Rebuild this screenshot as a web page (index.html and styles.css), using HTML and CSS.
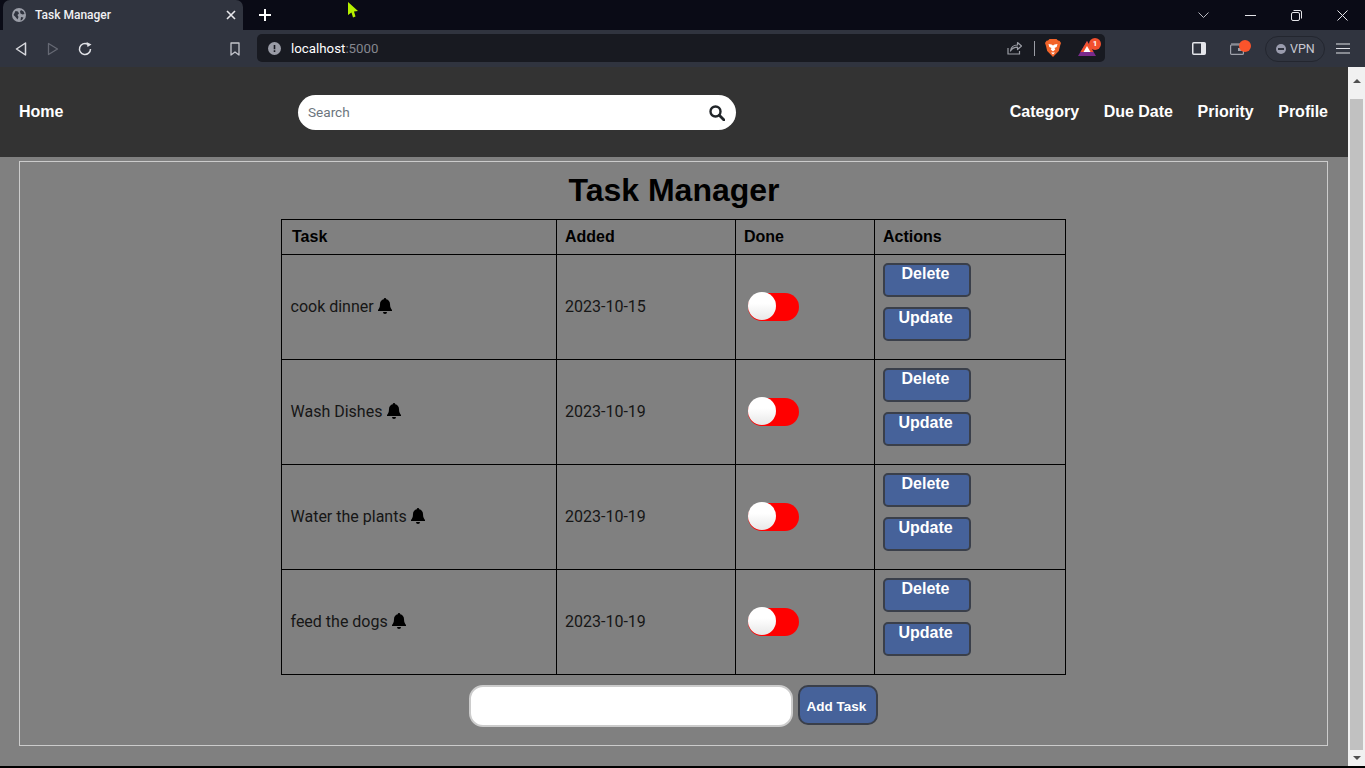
FILE: index.html
```html
<!DOCTYPE html>
<html lang="en">
<head>
<meta charset="utf-8">
<title>Task Manager</title>
<link rel="stylesheet" href="styles.css">
</head>
<body>
<div class="tabstrip">
  <div class="tab">
    <svg class="globe" width="14" height="14" viewBox="0 0 14 14"><circle cx="7" cy="7" r="7" fill="#9b9ea8"/><path d="M3.500 3l2.500.5 1 2-1.500 1.500 1 2-1 2.500-2-2.500-2-2zM9 2l2.500 1.500 1 2.500-2 .5-2-1-.5-2zM9 9l2.500 .5-1.500 2.500-1.500 .5z" fill="#30343f"/></svg>
    <span class="tab-title">Task Manager</span>
    <svg class="tab-close" width="10" height="10" viewBox="0 0 10 10"><path d="M1 1l8 8M9 1l-8 8" stroke="#e8e8ec" stroke-width="1.600"/></svg>
  </div>
  <svg class="new-tab" width="12" height="12" viewBox="0 0 12 12"><path d="M6 0v12M0 6h12" stroke="#fff" stroke-width="2"/></svg>
  <div class="window-controls">
    <svg class="wc-chevron" width="11" height="7" viewBox="0 0 11 7"><path d="M.5 .5l5 5 5-5" fill="none" stroke="#b8b9c0"/></svg>
    <svg class="wc-min" width="11" height="3" viewBox="0 0 11 3"><path d="M0 1.500h11" stroke="#e4e4e8"/></svg>
    <svg class="wc-restore" width="11" height="11" viewBox="0 0 11 11"><rect x=".5" y="2.500" width="8" height="8" rx="1.500" fill="none" stroke="#e4e4e8"/><path d="M2.500 .5h6.500a1.500 1.500 0 0 1 1.500 1.500v6.500" fill="none" stroke="#e4e4e8"/></svg>
    <svg class="wc-close" width="11" height="11" viewBox="0 0 11 11"><path d="M.5 .5l10 10M10.500 .5l-10 10" stroke="#e4e4e8"/></svg>
  </div>
</div>
<div class="toolbar">
  <svg class="tb-back" width="12" height="14" viewBox="0 0 12 14"><path d="M10.500 1v12L1.500 7z" fill="none" stroke="#d8d9de" stroke-width="1.500" stroke-linejoin="round"/></svg>
  <svg class="tb-forward" width="12" height="14" viewBox="0 0 12 14"><path d="M1.500 1.500v11l9-5.500z" fill="none" stroke="#666974" stroke-width="1.300" stroke-linejoin="round"/></svg>
  <svg class="tb-reload" width="14" height="14" viewBox="0 0 14 14"><path d="M12.500 7A5.500 5.500 0 1 1 9.500 2.100" fill="none" stroke="#e0e1e6" stroke-width="1.500"/><path d="M8.500 0l5 2.500-4 2.500z" fill="#e0e1e6"/></svg>
  <svg class="tb-bookmark" width="10" height="14" viewBox="0 0 10 14"><path d="M1 1h8v12L5 10l-4 3z" fill="none" stroke="#c4c5cc" stroke-width="1.300" stroke-linejoin="round"/></svg>
  <div class="address">
    <svg class="info" width="13" height="13" viewBox="0 0 13 13"><circle cx="6.500" cy="6.500" r="6.500" fill="#9a9ca6"/><path d="M5.700 3h1.600v4.200H5.700zM5.700 8.300h1.600v1.600H5.700z" fill="#181a21"/></svg>
    <span class="host">localhost<span class="port">:5000</span></span>
    <svg class="share" width="15" height="14" viewBox="0 0 15 14"><path d="M1 7v6h11.500V10" fill="none" stroke="#9b9da5" stroke-width="1.200"/><path d="M3.500 10c.5-4 3.500-6 7-6V1.500L14.500 5l-4 3.500V6.200C7.500 6.200 5 7.500 3.500 10z" fill="none" stroke="#9b9da5" stroke-width="1.200" stroke-linejoin="round"/></svg>
    <span class="sep"></span>
    <svg class="brave" width="16" height="18" viewBox="0 0 16 18"><path d="M4.500 0h7L13 1.500l1.500.2L16 4l-1 3-1.200 5L8 18l-5.800-6L1 7 0 4l1.500-2.300L3 1.500z" fill="#f2642a"/><path d="M3.500 5l3 .5L8 6.500l1.500-1 3-.5-.8 3-2.200 1 .8 1.500L8 12.500 5.700 10.500l.8-1.500-2.200-1zM6 13.500h4L8 15.500z" fill="#fff"/></svg>
    <span class="rewards">
      <svg width="18" height="15" viewBox="0 0 18 15"><path d="M9 0l9 15H0z" fill="#7a2a8c"/><path d="M9 0l6.500 11H2.500z" fill="#f2542d"/><path d="M9 5l3.500 6h-7z" fill="#fff"/></svg>
      <span class="badge">1</span>
    </span>
  </div>
  <svg class="tb-sidebar" width="14" height="13" viewBox="0 0 14 13"><rect x=".75" y=".75" width="12.500" height="11.500" rx="1" fill="none" stroke="#e4e5ea" stroke-width="1.500"/><rect x="9" y="1" width="4" height="11" fill="#e4e5ea"/></svg>
  <span class="wallet">
    <svg width="14" height="12" viewBox="0 0 14 12"><rect x=".6" y="2" width="12.800" height="9.400" rx="1" fill="none" stroke="#9fa1aa" stroke-width="1.200"/><path d="M1 1h9" stroke="#9fa1aa" stroke-width="1.200"/><rect x="8" y="5" width="5" height="3" fill="#9fa1aa"/></svg>
    <span class="wallet-dot"></span>
  </span>
  <div class="vpn">
    <svg class="vpn-dot" width="10" height="10" viewBox="0 0 10 10"><circle cx="5" cy="5" r="5" fill="#9a9cae"/><rect x="2" y="4" width="6" height="2" fill="#30343f"/></svg>
    VPN
  </div>
  <svg class="tb-menu" width="14" height="11" viewBox="0 0 14 11"><path d="M0 1h14M0 5.500h14M0 10h14" stroke="#e0e1e6" stroke-width="1.200"/></svg>
</div>
<div class="viewport">
  <div class="page">
    <nav class="nav">
      <a class="nav-link">Home</a>
      <div class="search">
        <span class="search-text">Search</span>
        <svg width="16" height="16" viewBox="0 0 16 16"><circle cx="6.500" cy="6.500" r="5" fill="none" stroke="#212529" stroke-width="2.400"/><path d="M10.300 10.300L15 15" stroke="#212529" stroke-width="2.800" stroke-linecap="round"/></svg>
      </div>
      <div class="nav-right">
        <a class="nav-link">Category</a>
        <a class="nav-link">Due Date</a>
        <a class="nav-link">Priority</a>
        <a class="nav-link">Profile</a>
      </div>
    </nav>
    <main class="box">
      <h1 class="title">Task Manager</h1>
      <table class="tasks">
        <colgroup><col class="c1"><col class="c2"><col class="c3"><col class="c4"></colgroup>
        <thead><tr><th>Task</th><th>Added</th><th>Done</th><th>Actions</th></tr></thead>
        <tbody>
          <tr>
            <td>cook dinner <svg class="bell" width="14" height="16" viewBox="0 0 14 16"><path d="M7 0a1.200 1.200 0 0 1 1.200 1.300C10.500 1.800 12 3.700 12 6c0 3.500 1 4.800 2 6v1H0v-1c1-1.200 2-2.500 2-6 0-2.300 1.500-4.200 3.800-4.700A1.200 1.200 0 0 1 7 0zM5 14h4a2 2 0 0 1-4 0z"/></svg></td>
            <td>2023-10-15</td>
            <td><span class="toggle"><span class="knob"></span></span></td>
            <td class="actions"><button class="btn">Delete</button><button class="btn">Update</button></td>
          </tr>
          <tr>
            <td>Wash Dishes <svg class="bell" width="14" height="16" viewBox="0 0 14 16"><path d="M7 0a1.200 1.200 0 0 1 1.200 1.300C10.500 1.800 12 3.700 12 6c0 3.500 1 4.800 2 6v1H0v-1c1-1.200 2-2.500 2-6 0-2.300 1.500-4.200 3.800-4.700A1.200 1.200 0 0 1 7 0zM5 14h4a2 2 0 0 1-4 0z"/></svg></td>
            <td>2023-10-19</td>
            <td><span class="toggle"><span class="knob"></span></span></td>
            <td class="actions"><button class="btn">Delete</button><button class="btn">Update</button></td>
          </tr>
          <tr>
            <td>Water the plants <svg class="bell" width="14" height="16" viewBox="0 0 14 16"><path d="M7 0a1.200 1.200 0 0 1 1.200 1.300C10.500 1.800 12 3.700 12 6c0 3.500 1 4.800 2 6v1H0v-1c1-1.200 2-2.500 2-6 0-2.300 1.500-4.200 3.800-4.700A1.200 1.200 0 0 1 7 0zM5 14h4a2 2 0 0 1-4 0z"/></svg></td>
            <td>2023-10-19</td>
            <td><span class="toggle"><span class="knob"></span></span></td>
            <td class="actions"><button class="btn">Delete</button><button class="btn">Update</button></td>
          </tr>
          <tr>
            <td>feed the dogs <svg class="bell" width="14" height="16" viewBox="0 0 14 16"><path d="M7 0a1.200 1.200 0 0 1 1.200 1.300C10.500 1.800 12 3.700 12 6c0 3.500 1 4.800 2 6v1H0v-1c1-1.200 2-2.500 2-6 0-2.300 1.500-4.200 3.800-4.700A1.200 1.200 0 0 1 7 0zM5 14h4a2 2 0 0 1-4 0z"/></svg></td>
            <td>2023-10-19</td>
            <td><span class="toggle"><span class="knob"></span></span></td>
            <td class="actions"><button class="btn">Delete</button><button class="btn">Update</button></td>
          </tr>
        </tbody>
      </table>
      <form class="add-row">
        <input class="add-input" type="text">
        <button class="add-btn" type="button">Add Task</button>
      </form>
    </main>
  </div>
  <div class="scrollbar">
    <span class="arrow-up"></span>
    <span class="thumb"></span>
    <span class="arrow-down"></span>
  </div>
</div>
<div class="bottom-edge"></div>
<svg class="cursor" width="12" height="18" viewBox="0 0 12 18"><path d="M1 1l10 9-4 .5 1.500 5-2.500 1-1.500-5L1 14z" fill="#b6f000"/></svg>
</body>
</html>
```
FILE: styles.css
```css
* { box-sizing: border-box; }
html, body { margin: 0; height: 100%; overflow: hidden; }
body { display: flex; flex-direction: column; font-family: "Liberation Sans", Arial, sans-serif; background: #000; }
svg { display: block; flex: none; }

.tabstrip { height: 30px; flex: none; background: #0a0b16; display: flex; align-items: center; padding-left: 3px; }
.tab { width: 240px; height: 30px; background: #30343f; border-radius: 7px 7px 0 0; display: flex; align-items: center; padding-left: 9px; }
.tab-title { margin-left: 9px; font: 500 12px/16px Roboto, sans-serif; color: #f0f0f3; width: 191px; }
.new-tab { margin-left: 16px; }
.window-controls { margin-left: auto; display: flex; align-items: center; padding-right: 17px; }
.wc-min { margin-left: 36px; }
.wc-restore { margin-left: 35px; }
.wc-close { margin-left: 35px; }

.toolbar { height: 37px; flex: none; background: #30343f; display: flex; align-items: center; padding-left: 15px; }
.tb-forward { margin-left: 20px; }
.tb-reload { margin-left: 19px; }
.tb-bookmark { margin-left: 138px; }
.address { width: 848px; height: 28px; margin-left: 17px; margin-top: -1px; background: #181a21; border-radius: 5px; display: flex; align-items: center; padding-left: 11px; }
.host { margin-left: 10px; margin-top: 1px; font: 13.3px/16px Roboto, sans-serif; color: #fff; }
.port { color: #85878f; }
.share { margin-left: auto; }
.sep { width: 1px; height: 15px; background: #9b9da5; margin-left: 12px; }
.brave { margin-left: 10px; }
.rewards { position: relative; margin-left: 17px; margin-right: 9px; }
.badge { position: absolute; top: -3px; right: -5px; width: 12px; height: 12px; border-radius: 50%; background: #f2502e; color: #fff; font: 700 8px/12px Roboto, sans-serif; text-align: center; }
.tb-sidebar { margin-left: 87px; }
.wallet { position: relative; margin-left: 24px; }
.wallet-dot { position: absolute; top: -3px; left: 9px; width: 12px; height: 12px; border-radius: 50%; background: #fb542b; }
.vpn { width: 60px; height: 26px; margin-left: 21px; border: 1px solid #23262f; border-radius: 13px; display: flex; align-items: center; padding-left: 10px; font: 400 12.5px/16px Roboto, sans-serif; color: #c8c9d2; }
.vpn-dot { margin-right: 4px; }
.tb-menu { margin-left: 11px; }

.viewport { flex: 1; min-height: 0; display: flex; }
.page { flex: 1; min-width: 0; background: #808080; overflow: hidden; }
.nav { height: 90px; background: #333; display: flex; align-items: center; padding: 0 20px 0 19px; }
.nav-link { font-size: 16px; font-weight: 700; line-height: 20px; color: #fff; }
.search { width: 438px; height: 35px; margin-left: 235px; margin-top: 1px; background: #fff; border-radius: 18px; display: flex; align-items: center; justify-content: space-between; padding: 0 11px 0 9.500px; }
.search-text { font: 13.6px/20px Roboto, sans-serif; color: #6c757d; margin-top: -1px; }
.nav-right { margin-left: auto; display: flex; gap: 24.6px; }

.box { margin: 4px 20px 0 19px; height: 585px; border: 1px solid #ccc; }
.title { margin: 0; height: 57px; padding-left: 1px; font-size: 32px; line-height: 57px; font-weight: 700; text-align: center; color: #000; }
.tasks { width: 785px; margin: 0 auto; border-collapse: collapse; table-layout: fixed; color: #000; }
.c1 { width: 275px; }
.c2 { width: 179px; }
.c3 { width: 139px; }
.c4 { width: 191px; }
.tasks th, .tasks td { border: 1px solid #000; padding: 0 8px; text-align: left; }
.tasks th:first-child { padding-left: 10px; }
.tasks td:first-child { padding-left: 8.500px; }
.tasks thead tr { height: 35px; }
.tasks tbody tr { height: 105px; }
.tasks th { font-size: 16px; font-weight: 700; line-height: 20px; padding-bottom: 1px; }
.tasks td { font: 16px/20px Roboto, sans-serif; color: #161616; }
.tasks .actions { padding-bottom: 10px; }
.bell { display: inline-block; vertical-align: -2px; margin-left: .5px; }
.toggle { display: block; width: 51px; height: 28px; margin-left: 4px; border-radius: 14px; background: #f00; }
.knob { display: block; width: 28px; height: 28px; border-radius: 50%; background: linear-gradient(#fff 40%, #e8e8e8); position: relative; top: -1px; }
.btn { display: block; width: 88px; height: 34px; margin: 0; padding: 0 3px 13px 0; background: #46629a; border: 2px solid #3a3f4a; border-radius: 5px; color: #fff; font: 700 16px/18px "Liberation Sans", Arial, sans-serif; text-align: center; }
.btn + .btn { margin-top: 10px; }

.add-row { display: flex; justify-content: center; align-items: flex-start; gap: 5px; margin-top: 10px; padding-right: 1px; }
.add-input { width: 324px; height: 42px; margin: 0; background: #fff; border: 2px solid #ccc; border-radius: 14px; }
.add-btn { width: 80px; height: 40px; padding: 3px 2px 0 0; background: #46629a; border: 2px solid #3a3f4a; border-radius: 10px; color: #fff; font: 700 13.5px/18px "Liberation Sans", Arial, sans-serif; }

.scrollbar { width: 17px; flex: none; background: #f1f1f1; display: flex; flex-direction: column; align-items: center; padding-top: 12px; padding-bottom: 6px; }
.arrow-up { width: 0; height: 0; border: 4px solid transparent; border-top: 0; border-bottom: 4px solid #505050; }
.thumb { width: 13px; height: 651px; background: #c1c1c1; margin-top: 16px; }
.arrow-down { width: 0; height: 0; border: 4px solid transparent; border-bottom: 0; border-top: 4px solid #505050; margin-top: 6px; }

.bottom-edge { height: 2px; flex: none; background: #000; }
.cursor { position: absolute; left: 347px; top: 1px; }
```
